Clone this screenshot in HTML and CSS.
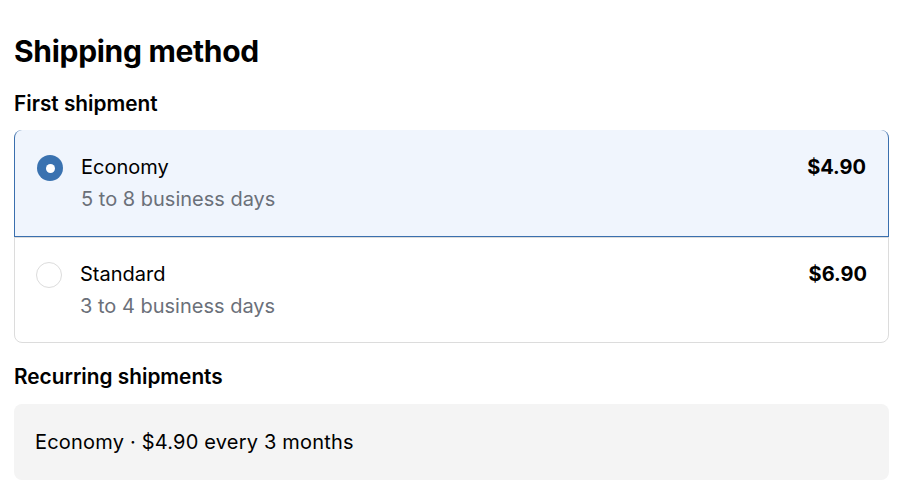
FILE: index.html
```html
<!DOCTYPE html>
<html>
<head>
<meta charset="utf-8">
<link rel="stylesheet" href="styles.css">
</head>
<body>
<main class="page">
  <h1 class="title">Shipping method</h1>
  <h2 class="section-label">First shipment</h2>
  <div class="options">
    <div class="option option-selected">
      <span class="radio radio-on"></span>
      <div class="option-text">
        <div class="option-name">Economy</div>
        <div class="option-sub">5 to 8 business days</div>
      </div>
      <div class="option-price">$4.90</div>
    </div>
    <div class="option">
      <span class="radio"></span>
      <div class="option-text">
        <div class="option-name">Standard</div>
        <div class="option-sub">3 to 4 business days</div>
      </div>
      <div class="option-price">$6.90</div>
    </div>
  </div>
  <h2 class="section-label section-recurring">Recurring shipments</h2>
  <div class="recurring">Economy · $4.90 every 3 months</div>
</main>
</body>
</html>
```

FILE: styles.css
```css
* { box-sizing: border-box; }
html, body { margin: 0; padding: 0; background: #fff; }
body {
  font-family: Inter, "Liberation Sans", sans-serif;
  color: #000;
}
.page {
  width: 875px;
  margin-left: 14px;
  padding-top: 33px;
}
.title {
  margin: 0;
  font-size: 30px;
  line-height: 36px;
  font-weight: 700;
  letter-spacing: -0.3px;
}
.section-label {
  margin: 23px 0 14px;
  font-size: 20.8px;
  line-height: 24px;
  font-weight: 600;
}
.section-recurring { margin-top: 22px; margin-bottom: 15px; }
.options {
  border: 1px solid #dcdcdc;
  border-radius: 8px;
}
.option {
  display: flex;
  align-items: flex-start;
  gap: 18px;
  padding: 22px 21px 22px 21px;
  border-top: 1px solid #dcdcdc;
}
.option:first-child { border-top: none; }
.option-selected {
  margin: -1px -1px 0 -1px;
  border: 1px solid #3a6fae;
  border-radius: 8px 8px 0 0;
  background: #f0f5fd;
  padding: 23px 22px 23px 22px;
}
.radio {
  flex: none;
  width: 26px;
  height: 26px;
  margin-top: 2px;
  border-radius: 50%;
  border: 1px solid #dcdcdc;
  background: #fff;
  display: flex;
  align-items: center;
  justify-content: center;
}
.radio-on {
  border: none;
  background: #3a72b0;
}
.radio-on::after {
  content: "";
  width: 9px;
  height: 9px;
  border-radius: 50%;
  background: #fff;
}
.option-text { flex: 1; }
.option-name {
  font-size: 20px;
  line-height: 28px;
}
.option-sub {
  margin-top: 4px;
  font-size: 20px;
  line-height: 28px;
  color: #6b7079;
}
.option-price {
  font-size: 20px;
  line-height: 28px;
  font-weight: 700;
}
.recurring {
  background: #f4f4f4;
  border-radius: 8px;
  padding: 24px 21px 24px;
  font-size: 20px;
  line-height: 28px;
  letter-spacing: 0.2px;
}
```
